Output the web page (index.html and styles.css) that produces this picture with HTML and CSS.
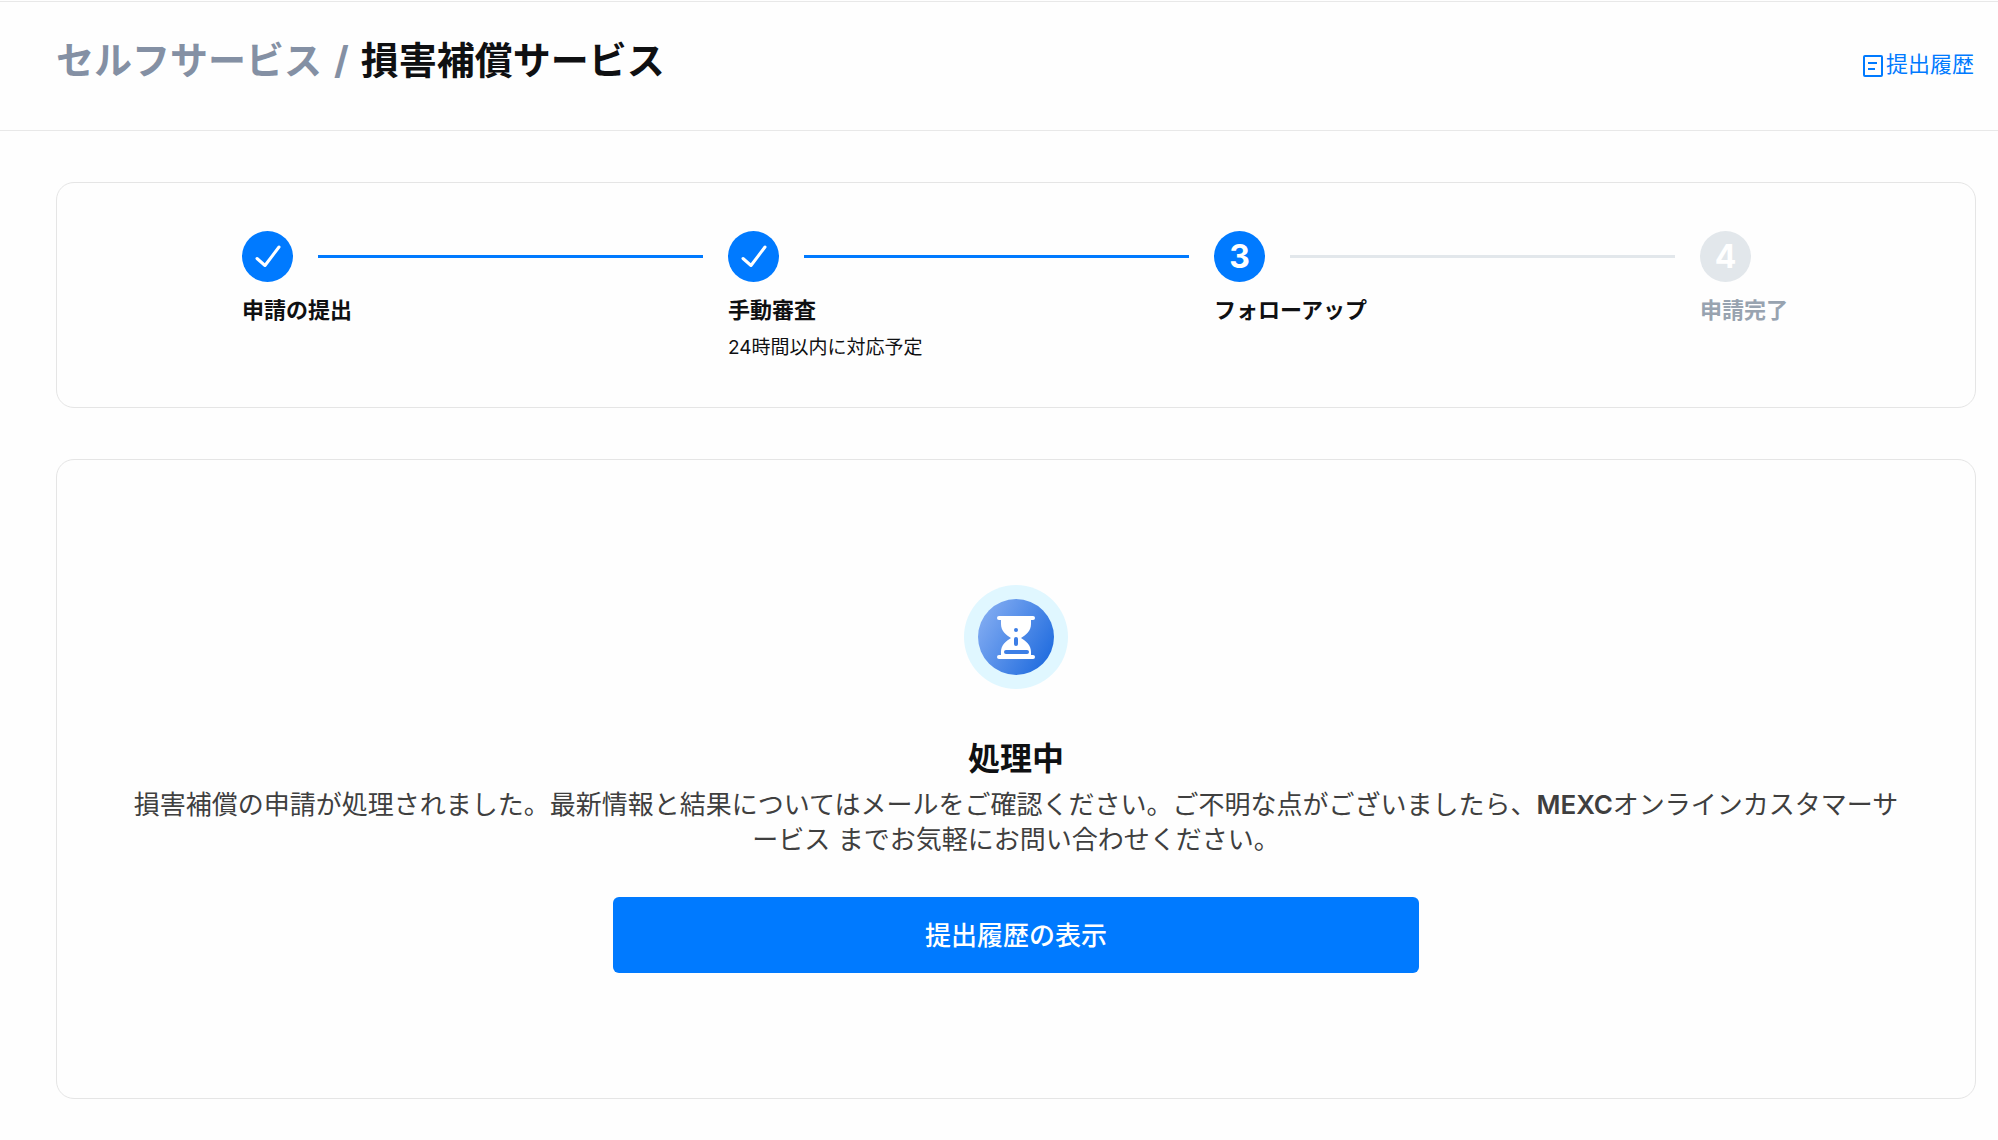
FILE: index.html
```html
<!DOCTYPE html>
<html lang="ja">
<head>
  <meta charset="UTF-8" />
  <meta name="viewport" content="width=device-width, initial-scale=1" />
  <title>損害補償サービス</title>
  <link rel="stylesheet" href="styles.css">
</head>
<body>
  <header class="header">
    <h1 class="breadcrumb"><a href="#">セルフサービス</a> <span>/</span> 損害補償サービス</h1>
    <a class="history-link" href="#">
      <svg width="22" height="24" viewBox="0 0 22 24" fill="none" stroke="currentColor" stroke-width="2">
        <rect x="2" y="2" width="18" height="20" rx="1" />
        <path d="M6 9h9M6 15h7" />
      </svg>
      <span>提出履歴</span>
    </a>
  </header>

  <main>
    <!-- Etapas -->
    <section class="card">
      <ol class="steps">
        <li class="step done">
          <div class="step-top">
            <div class="circle">
              <svg width="28" height="28" viewBox="0 0 28 28"><path d="M3 15.5l8 7L25 4" /></svg>
            </div>
            <div class="line"></div>
          </div>
          <div class="label">申請の提出</div>
        </li>
        <li class="step done">
          <div class="step-top">
            <div class="circle">
              <svg width="28" height="28" viewBox="0 0 28 28"><path d="M3 15.5l8 7L25 4" /></svg>
            </div>
            <div class="line"></div>
          </div>
          <div class="label">手動審査</div>
          <div class="note">24時間以内に対応予定</div>
        </li>
        <li class="step">
          <div class="step-top">
            <div class="circle">3</div>
            <div class="line"></div>
          </div>
          <div class="label">フォローアップ</div>
        </li>
        <li class="step pending">
          <div class="step-top">
            <div class="circle">4</div>
          </div>
          <div class="label">申請完了</div>
        </li>
      </ol>
    </section>

    <section class="card result">
      <svg width="104" height="104" viewBox="0 0 104 104">
        <defs>
          <linearGradient id="blue" x1="0" y1="0.2" x2="1" y2="0.8">
            <stop offset="0" stop-color="#84adf2" />
            <stop offset="1" stop-color="#1d6ade" />
          </linearGradient>
        </defs>
        <circle cx="52" cy="52" r="52" fill="#e0f7ff" />
        <circle cx="52" cy="52" r="38" fill="url(#blue)" />
        <g fill="#fff">
          <rect x="33" y="31" width="38" height="4" rx="2" />
          <rect x="33" y="70" width="38" height="4" rx="2" />
          <path d="M37 34h30v5c0 7-5 11-10 14 5 3 10 7 10 14v4H37v-4c0-7 5-11 10-14-5-3-10-7-10-14z" />
        </g>
        <g fill="#3c7ee6">
          <circle cx="52" cy="45" r="2" />
          <rect x="50" y="52" width="4" height="9" rx="2" />
          <rect x="40" y="65" width="25" height="4" rx="2" />
        </g>
      </svg>
      <h2>処理中</h2>
      <p>損害補償の申請が処理されました。最新情報と結果についてはメールをご確認ください。ご不明な点がございましたら、<strong>MEXC</strong>オンラインカスタマーサービス までお気軽にお問い合わせください。</p>
      <button type="button">提出履歴の表示</button>
    </section>
  </main>
</body>
</html>
```
FILE: styles.css
```css
body {
  font-family: Inter, "Noto Sans CJK JP", sans-serif;
  margin: 0;
  background: #fefefe;
  color: #0f1012;
}

.header {
  display: flex;
  justify-content: space-between;
  align-items: center;
  height: 128px;
  margin-top: 1px;
  padding: 0 24px 0 56px;
  border-top: 1px solid #e8e8e8;
  border-bottom: 1px solid #e8e8e8;
}

.breadcrumb {
  margin: 0;
  padding-bottom: 12px;
  font-size: 38px;
  line-height: 56px;
}

.breadcrumb a,
.breadcrumb span {
  color: #8490a4;
  text-decoration: none;
}

.breadcrumb span {
  margin: 0 3px;
}

.history-link {
  display: flex;
  align-items: center;
  gap: 2px;
  font-size: 22px;
  line-height: 28px;
  color: #007aff;
  text-decoration: none;
}

.history-link span {
  padding-bottom: 4px;
}

main {
  display: flex;
  flex-direction: column;
  gap: 51px;
  padding: 51px 22px 40px 56px;
}

.card {
  border: 1px solid #e5e5e5;
  border-radius: 18px;
}

.steps {
  display: flex;
  list-style: none;
  margin: 0;
  padding: 48px 187px 45px 185px;
}

.step {
  flex: 1;
}

.step-top {
  display: flex;
  align-items: center;
  gap: 25px;
  margin-right: 25px;
}

.circle {
  display: flex;
  align-items: center;
  justify-content: center;
  width: 51px;
  height: 51px;
  border-radius: 50%;
  background: #007aff;
  color: #fff;
  font-size: 32px;
  font-weight: bold;
}

.circle path {
  fill: none;
  stroke: #fff;
  stroke-width: 3;
  stroke-linecap: round;
  stroke-linejoin: round;
}

.line {
  flex: 1;
  height: 3px;
  background: #e2e7eb;
}

.done .line {
  background: #007aff;
}

.label {
  margin-top: 12px;
  font-size: 22px;
  font-weight: bold;
  line-height: 32px;
}

.note {
  margin-top: 8px;
  font-size: 19px;
  line-height: 28px;
}

.pending {
  flex: none;
}

.pending .circle {
  background: #e2e7eb;
}

.pending .label {
  color: #98a3b0;
}

.result {
  display: flex;
  flex-direction: column;
  align-items: center;
  padding: 125px 72px;
}

.result h2 {
  margin: 48px 0 6px;
  font-size: 32px;
  line-height: 44px;
}

.result p {
  margin: 0;
  font-size: 26px;
  line-height: 35px;
  text-align: center;
  color: #3f3f3f;
}

.result strong {
  font-weight: 600;
}

.result button {
  width: 100%;
  max-width: 806px;
  height: 76px;
  margin-top: 40px;
  padding: 0 0 4px;
  border: 0;
  border-radius: 6px;
  background: #007aff;
  color: #fff;
  font-family: inherit;
  font-size: 26px;
  font-weight: 500;
}
```
